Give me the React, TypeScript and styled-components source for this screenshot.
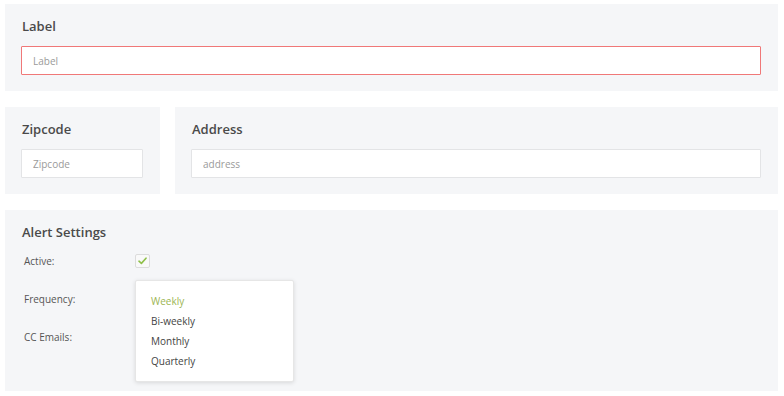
import styled, { createGlobalStyle } from 'styled-components';

const GlobalStyle = createGlobalStyle`
  body {
    margin: 0;
    background: #ffffff;
    font-family: 'Open Sans', 'Noto Sans', sans-serif;
    color: #4a4a4a;
  }
  * {
    box-sizing: border-box;
  }
`;

const Page = styled.div`
  display: flex;
  flex-direction: column;
  gap: 16px;
  padding: 4px 6px 4px 5px;
`;

const Row = styled.div`
  display: flex;
  gap: 15px;
`;

const Panel = styled.section<{ $width?: number; $bottom?: number }>`
  background: #f5f6f8;
  padding: 13px 17px ${(p) => p.$bottom ?? 16}px 16px;
  display: flex;
  flex-direction: column;
  gap: 11px;
  ${(p) => (p.$width ? `width: ${p.$width}px; flex: none;` : 'flex: 1;')}
`;

const Title = styled.h2<{ $tight?: boolean }>`
  margin: 0;
  padding-left: 1px;
  font-size: 13px;
  line-height: 18px;
  font-weight: 600;
  color: #4a4a4a;
  margin-bottom: ${(p) => (p.$tight ? '-5px' : '0')};
`;

const TextInput = styled.input<{ $error?: boolean }>`
  height: 29px;
  width: 100%;
  padding: 0 11px;
  border: 1px solid ${(p) => (p.$error ? '#f07878' : '#e3e4e6')};
  border-radius: 1px;
  background: #ffffff;
  font-family: inherit;
  font-size: 10px;
  color: #555;
  outline: none;
  &::placeholder {
    color: #9a9a9a;
  }
`;

const SettingsGrid = styled.div`
  display: grid;
  grid-template-columns: 111px 159px;
  grid-auto-rows: 28px;
  row-gap: 10px;
  padding-left: 3px;
`;

const FieldLabel = styled.div`
  display: flex;
  align-items: center;
  font-size: 10px;
  color: #555;
`;

const Control = styled.div`
  position: relative;
  display: flex;
  align-items: center;
`;

const CheckBox = styled.span`
  width: 15px;
  height: 14px;
  border: 1px solid #dcdcdc;
  border-radius: 2px;
  background: #f9f9f9;
  display: flex;
  align-items: center;
  justify-content: center;
`;

const SelectBox = styled.div`
  width: 159px;
  height: 28px;
  border: 1px solid #e3e4e6;
  background: #ffffff;
`;

const Menu = styled.ul`
  position: absolute;
  top: -5px;
  left: 0;
  width: 159px;
  margin: 0;
  padding: 10px 0;
  list-style: none;
  background: #ffffff;
  border: 1px solid #e6e6e6;
  border-radius: 2px;
  box-shadow: 0 1px 4px rgba(0, 0, 0, 0.12);
  z-index: 2;
`;

const MenuItem = styled.li<{ $active?: boolean }>`
  height: 20px;
  line-height: 20px;
  padding-left: 15px;
  font-size: 10px;
  color: ${(p) => (p.$active ? '#9cb552' : '#444')};
`;

const options = ['Weekly', 'Bi-weekly', 'Monthly', 'Quarterly'];

const App = () => (
  <>
    <GlobalStyle />
    <Page>
      <Panel>
        <Title>Label</Title>
        <TextInput $error placeholder="Label" />
      </Panel>
      <Row>
        <Panel $width={155}>
          <Title>Zipcode</Title>
          <TextInput placeholder="Zipcode" />
        </Panel>
        <Panel>
          <Title>Address</Title>
          <TextInput placeholder="address" />
        </Panel>
      </Row>
      <Panel $bottom={40}>
        <Title $tight>Alert Settings</Title>
        <SettingsGrid>
          <FieldLabel>Active:</FieldLabel>
          <Control>
            <CheckBox>
              <svg width="9" height="8" viewBox="0 0 9 8">
                <path d="M1 4.2 L3.4 6.4 L8 1.2" fill="none" stroke="#8fc04a" strokeWidth="1.6" strokeLinecap="round" strokeLinejoin="round" />
              </svg>
            </CheckBox>
          </Control>
          <FieldLabel>Frequency:</FieldLabel>
          <Control>
            <SelectBox />
            <Menu>
              {options.map((o, i) => (
                <MenuItem key={o} $active={i === 0}>
                  {o}
                </MenuItem>
              ))}
            </Menu>
          </Control>
          <FieldLabel>CC Emails:</FieldLabel>
          <Control>
            <SelectBox />
          </Control>
        </SettingsGrid>
      </Panel>
    </Page>
  </>
);

export default App;
